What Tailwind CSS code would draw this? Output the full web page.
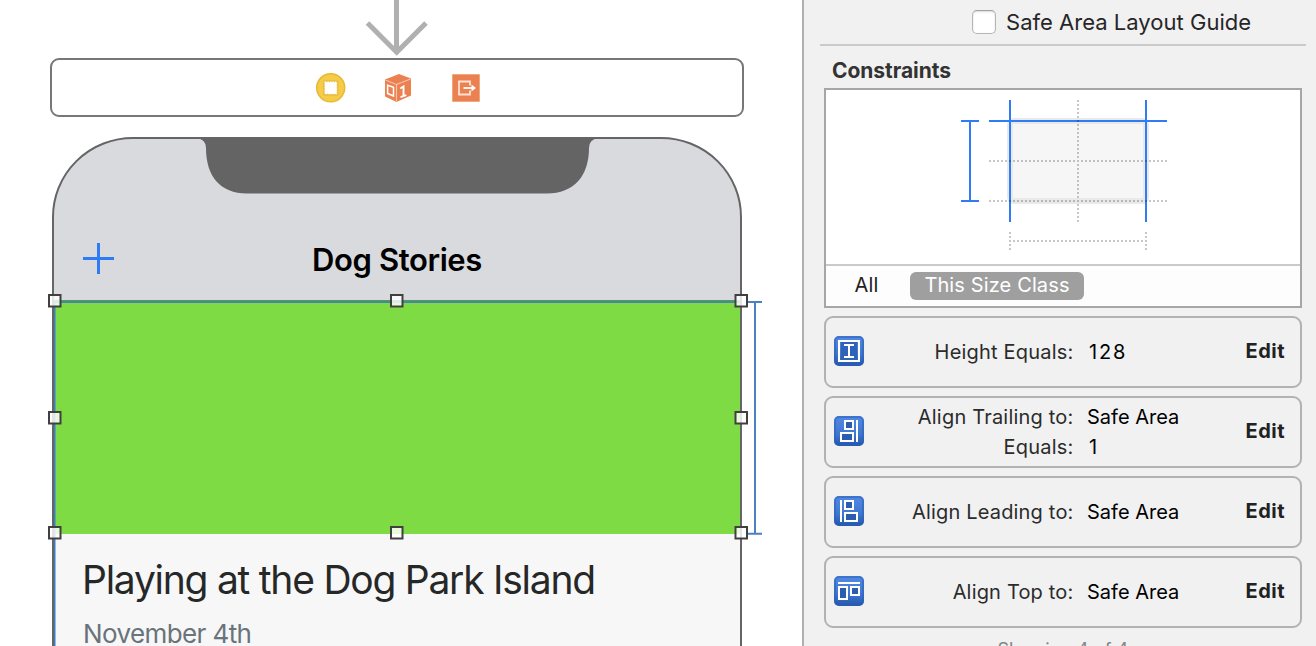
<!DOCTYPE html>
<html lang="en">
<head>
<meta charset="utf-8">
<title>Dog Stories storyboard</title>
<script src="https://cdn.jsdelivr.net/npm/@tailwindcss/browser@4"></script>
</head>
<body class="w-[1316px] h-[646px] overflow-hidden flex bg-white font-['Inter',sans-serif]">

<main class="w-[802px] h-[646px] shrink-0 overflow-hidden relative flex flex-col">
  <svg class="block shrink-0 w-[802px] h-[58px]" viewBox="0 0 802 58" fill="none" stroke="#b0b0b0" stroke-width="5">
    <path d="M396.500 0V51"/><path d="M367.500 23L396.700 52.300L426 23"/>
  </svg>
  <div class="ml-[50px] w-[694px] h-[58.500px] shrink-0 border-2 border-[#777] rounded-[9px] bg-white flex items-center pl-[264px] pt-px">
    <svg class="w-[30px] h-[30px]" viewBox="0 0 30 30">
      <circle cx="14.700" cy="14.800" r="14" fill="#f6cb45" stroke="#e6b93a" stroke-width="1.500"/>
      <rect x="7" y="7.200" width="15.500" height="15.500" rx="1.500" fill="#e8be45"/>
      <rect x="9" y="9.200" width="11.500" height="11.500" fill="#fff" stroke="#fff" stroke-width="1.200" stroke-dasharray="1.500 1"/>
    </svg>
    <svg class="w-[28px] h-[30px] ml-[38px]" viewBox="0 0 28 30">
      <path d="M1 6.500L15 1L27 5.500V22.500L12.500 29L1 23.500Z" fill="#eb8150"/>
      <path d="M1.500 7L12.500 11.500V28.500M12.500 11.500L26.500 6" fill="none" stroke="#f8c4aa" stroke-width="1.100"/>
      <path d="M3.600 12.200L9.500 14.300V23L3.600 20.500Z" fill="none" stroke="#fff" stroke-width="1.500"/>
      <path d="M16.200 15.500L19.500 13.500V23.300M16.500 24.200L22.300 22.200" fill="none" stroke="#fff" stroke-width="1.900"/>
    </svg>
    <svg class="w-[28px] h-[28px] ml-[40px]" viewBox="0 0 28 28">
      <rect x=".3" y=".3" width="27.400" height="27.400" fill="#eb8150"/>
      <path d="M18 11.500V7.500H7V20.500H18V16.500" fill="none" stroke="#fde3d6" stroke-width="1.800"/>
      <path d="M11.500 14H22" stroke="#fff" stroke-width="1.800"/><path d="M19.500 10.500L24 14L19.500 17.500Z" fill="#fff"/>
    </svg>
  </div>

  <section class="relative ml-[52px] mt-[20.500px] w-[690px] h-[509px] shrink-0 flex flex-col">
    <svg class="absolute inset-0 w-[690px] h-[509px]" viewBox="52 137 690 509">
      <path d="M53 650V217A80 79 0 0 1 133 138H661A80 79 0 0 1 741 217V650Z" fill="#d9dade"/>
      <path d="M53 302H741V650H53Z" fill="#f7f7f7"/>
      <path d="M53 302H741V534H53Z" fill="#7edb43"/>
      <path d="M196 138Q206 139 206 148C206 176 220 193.500 247 193.500H547C574 193.500 589 176 589 148Q589 139 599 138Z" fill="#646464"/>
      <path d="M53 650V217A80 79 0 0 1 133 138H661A80 79 0 0 1 741 217V650" fill="none" stroke="#656565" stroke-width="2"/>
      <path d="M54 300.500H741" stroke="#4ba24a" stroke-width="1"/>
      <path d="M54 302H741" stroke="#4885a8" stroke-width="2"/>
      <path d="M54.700 302V650" stroke="#3d7bcb" stroke-width="1.600"/>
    </svg>
    <header class="relative mt-[90px] h-[66px] shrink-0 flex items-center justify-center">
      <svg class="absolute left-[31px] top-[16px] w-[31px] h-[31px]" viewBox="0 0 31 31"><path d="M0 15.500H31M15.500 0V31" stroke="#2f7bf6" stroke-width="3"/></svg>
      <h1 class="text-[31px] leading-[40px] font-semibold tracking-[-0.4px] text-black">Dog Stories</h1>
    </header>
    <div class="h-[241px] shrink-0"></div>
    <div class="relative pl-[30px] pt-[21px] whitespace-nowrap">
      <h2 class="text-[39px] leading-[50px] tracking-[-1.250px] text-[#262828]">Playing at the Dog Park Island</h2>
      <p class="mt-[13px] pl-px text-[26px] leading-[32px] tracking-[-0.600px] text-[#69737a]">November 4th</p>
    </div>
  </section>

  <!-- selection handles and height ruler -->
  <svg class="absolute left-0 top-[290px] w-[802px] h-[256px]" viewBox="0 290 802 256" fill="none">
    <path d="M748 302H762M755 302V534M748 533.800H762" stroke="#4b80c2" stroke-width="2"/>
    <g fill="#fff" fill-opacity=".82" stroke="#404040" stroke-width="2">
      <rect x="49" y="295" width="11.500" height="11.500"/><rect x="391" y="295" width="11.500" height="11.500"/><rect x="735.500" y="295" width="11.500" height="11.500"/>
      <rect x="49" y="412" width="11.500" height="11.500"/><rect x="735.500" y="412" width="11.500" height="11.500"/>
      <rect x="49" y="527" width="11.500" height="11.500"/><rect x="391" y="527" width="11.500" height="11.500"/><rect x="735.500" y="527" width="11.500" height="11.500"/>
    </g>
  </svg>
</main>

<aside class="w-[514px] h-[646px] shrink-0 overflow-hidden bg-[#f1f1f1] border-l-2 border-[#b0b0b0] pl-[20px] pr-[14px] flex flex-col text-[20px] tracking-[0.13px] text-[#2b2b2b] whitespace-nowrap">
  <label class="h-[44px] shrink-0 ml-[148px] flex items-center gap-[10px] text-[22px] tracking-[0.02px] text-[#262626]">
    <span class="w-[24px] h-[24px] rounded-[5px] bg-white border border-[#b5b5b5] border-t-[#a0a0a0] shadow-[inset_0_1px_2px_rgba(0,0,0,0.15)]"></span>
    <span>Safe Area Layout Guide</span>
  </label>
  <div class="-ml-[4px] -mr-[4px] h-[2px] shrink-0 bg-[#cacaca]"></div>
  <h3 class="h-[42px] shrink-0 pl-[8px] pt-[9px] leading-[32px] text-[21px] font-bold tracking-[-0.05px] text-[#333]">Constraints</h3>

  <div class="h-[220px] shrink-0 border-2 border-[#a6a6a6] bg-white flex flex-col">
    <svg class="block w-[474px] h-[174px] shrink-0" viewBox="826 90 474 174" fill="none" stroke-width="2">
      <rect x="1010" y="121" width="136" height="80" fill="#f6f6f6"/>
      <rect x="1010" y="121" width="136" height="80" rx="4" stroke="#e9e9e9" stroke-width="6"/>
      <g stroke="#2f7cf6"><path d="M1010 100V222M1146 100V222M989 121H1167M961 121H979M970 121V201M961 201H979"/></g>
      <g stroke="#000" stroke-opacity=".22" stroke-dasharray="2 2">
        <path d="M1078 100V222M989 161H1167M989 201H1167M1009 241H1147M1010 232V240M1010 244V250M1146 232V240M1146 244V250"/>
      </g>
    </svg>
    <div class="h-[42px] shrink-0 border-t-2 border-[#cacaca] bg-[#fdfdfd] flex items-center pl-[28.500px] gap-[30.500px] text-[#222]">
      <span class="w-[25px] pb-[2px]">All</span>
      <span class="w-[174px] h-[28px] rounded-[6px] bg-[#9f9f9f] text-white text-center leading-[27px]">This Size Class</span>
    </div>
  </div>

  <div class="mt-[8px] flex flex-col gap-[8px]">
    <div class="h-[72px] border-2 border-[#b2b2b2] rounded-[9px] flex items-center pl-[8px] pr-[15px]">
      <svg class="w-[30px] h-[30px] -mt-[2px]" viewBox="0 0 30 30" fill="none">
        <defs><linearGradient id="blue" x1="0" y1="0" x2="0" y2="1"><stop offset="0" stop-color="#5189e4"/><stop offset=".6" stop-color="#3f77d0"/><stop offset="1" stop-color="#2355ab"/></linearGradient></defs>
        <rect width="30" height="30" rx="5" fill="url(#blue)"/><rect x="1" y="1" width="28" height="28" rx="4" stroke="#2b5db5" stroke-opacity=".5" stroke-width="2"/>
        <path d="M7 6H23V24H7Z" fill="#2f63b9"/><rect x="5" y="5" width="20" height="20" stroke="#fff" stroke-width="2"/>
        <path d="M10 9H20M15 9V21M10 21H20" stroke="#fff" stroke-width="2"/>
      </svg>
      <span class="w-[209.500px] text-right tracking-[0.2px]">Height Equals:</span>
      <span class="ml-[15.500px] text-black tracking-[1.800px]">128</span>
      <b class="ml-auto pb-[2px] tracking-[0.5px] text-[#222]">Edit</b>
    </div>
    <div class="h-[72px] border-2 border-[#b2b2b2] rounded-[9px] flex items-center pl-[8px] pr-[15px]">
      <svg class="w-[30px] h-[30px] -mt-[2px]" viewBox="0 0 30 30" fill="none">
        <rect width="30" height="30" rx="5" fill="url(#blue)"/><rect x="1" y="1" width="28" height="28" rx="4" stroke="#2b5db5" stroke-opacity=".5" stroke-width="2"/>
        <g stroke="#fff" stroke-width="2" fill="#2b5caf"><path d="M23 4V26"/><rect x="11" y="5" width="8" height="8"/><rect x="7" y="17" width="12" height="8"/></g>
      </svg>
      <span class="w-[209.500px] text-right leading-[30px] tracking-[0.2px]">Align Trailing to:<br>Equals:</span>
      <span class="ml-[13.500px] text-black leading-[30px] tracking-[0]">Safe Area<br><span class="pl-[2px]">1</span></span>
      <b class="ml-auto pb-[2px] tracking-[0.5px] text-[#222]">Edit</b>
    </div>
    <div class="h-[72px] border-2 border-[#b2b2b2] rounded-[9px] flex items-center pl-[8px] pr-[15px]">
      <svg class="w-[30px] h-[30px] -mt-[2px]" viewBox="0 0 30 30" fill="none">
        <rect width="30" height="30" rx="5" fill="url(#blue)"/><rect x="1" y="1" width="28" height="28" rx="4" stroke="#2b5db5" stroke-opacity=".5" stroke-width="2"/>
        <g stroke="#fff" stroke-width="2" fill="#2b5caf"><path d="M7 4V26"/><rect x="11" y="5" width="8" height="8"/><rect x="11" y="17" width="12" height="8"/></g>
      </svg>
      <span class="w-[209.500px] text-right tracking-[0.18px]">Align Leading to:</span>
      <span class="ml-[13.500px] text-black tracking-[0]">Safe Area</span>
      <b class="ml-auto pb-[2px] tracking-[0.5px] text-[#222]">Edit</b>
    </div>
    <div class="h-[72px] border-2 border-[#b2b2b2] rounded-[9px] flex items-center pl-[8px] pr-[15px]">
      <svg class="w-[30px] h-[30px] -mt-[2px]" viewBox="0 0 30 30" fill="none">
        <rect width="30" height="30" rx="5" fill="url(#blue)"/><rect x="1" y="1" width="28" height="28" rx="4" stroke="#2b5db5" stroke-opacity=".5" stroke-width="2"/>
        <g stroke="#fff" stroke-width="2" fill="#2b5caf"><path d="M4 7H26"/><rect x="5" y="11" width="8" height="12"/><rect x="17" y="11" width="8" height="8"/></g>
      </svg>
      <span class="w-[209.500px] text-right tracking-[0.18px]">Align Top to:</span>
      <span class="ml-[13.500px] text-black tracking-[0]">Safe Area</span>
      <b class="ml-auto pb-[2px] tracking-[0.5px] text-[#222]">Edit</b>
    </div>
  </div>
  <p class="mt-[7px] h-[30px] shrink-0 text-center leading-[30px] text-[18px] text-[#858585]">Showing 4 of 4</p>
</aside>
</body>
</html>
